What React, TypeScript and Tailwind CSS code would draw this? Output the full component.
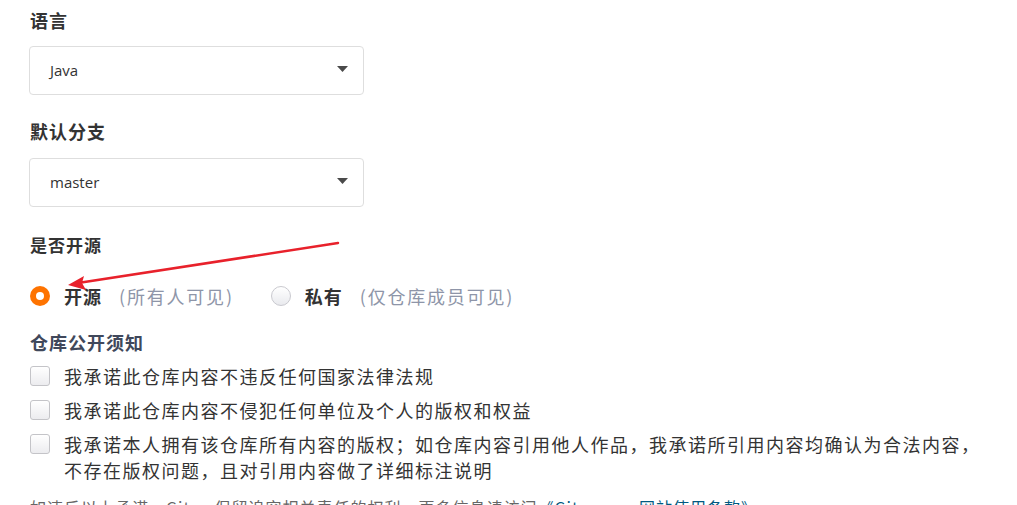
import { useState } from 'react'

const FONT = '[font-family:"Microsoft_YaHei","Noto_Sans_CJK_SC","Noto_Sans",sans-serif]'

const TERMS = [
  '我承诺此仓库内容不违反任何国家法律法规',
  '我承诺此仓库内容不侵犯任何单位及个人的版权和权益',
  '我承诺本人拥有该仓库所有内容的版权；如仓库内容引用他人作品，我承诺所引用内容均确认为合法内容，不存在版权问题，且对引用内容做了详细标注说明',
]

function Select({ value }: { value: string }) {
  return (
    <div className="flex h-[49px] w-[335px] items-center justify-between rounded-[4px] border border-[#dedede] bg-white pl-[20px] pr-[15px]">
      <span className="text-[15px] text-[#333] [font-family:'Open_Sans','Noto_Sans',sans-serif]">{value}</span>
      <svg width="11" height="6" viewBox="0 0 11 6" className="mb-[3px]">
        <path d="M0 0h11L5.5 6z" fill="#4a4a4a" />
      </svg>
    </div>
  )
}

function Radio({ checked }: { checked: boolean }) {
  return checked ? (
    <span className="flex size-[20px] items-center justify-center rounded-full bg-[#fe7300]">
      <span className="size-[8px] rounded-full bg-white" />
    </span>
  ) : (
    <span className="size-[20px] rounded-full border border-[#c9c9cf] bg-gradient-to-b from-white to-[#e9eaee]" />
  )
}

export default function App() {
  const [open, setOpen] = useState(true)
  const [agreed, setAgreed] = useState<boolean[]>([false, false, false])

  return (
    <div className={`relative h-[505px] w-[1017px] overflow-hidden bg-white pl-[30px] pt-[7px] ${FONT}`}>
      <h3 className="text-[18px] font-bold leading-[26px] tracking-[1px] text-[#333]">语言</h3>
      <div className="mt-[13px] -ml-px">
        <Select value="Java" />
      </div>

      <h3 className="mt-[23px] text-[18px] font-bold leading-[26px] tracking-[1px] text-[#333]">默认分支</h3>
      <div className="mt-[14px] -ml-px">
        <Select value="master" />
      </div>

      <h3 className="mt-[25px] text-[17px] font-bold leading-[26px] tracking-[1px] text-[#333]">是否开源</h3>

      <div className="mt-[25px] flex items-center text-[18px] leading-[26px]">
        <button type="button" onClick={() => setOpen(true)} className="flex items-center">
          <Radio checked={open} />
          <span className="ml-[14px] font-bold tracking-[1px] text-[#333]">开源</span>
          <span className="ml-[17px] tracking-[1.8px] text-[#8e95a8]">(所有人可见)</span>
        </button>
        <button type="button" onClick={() => setOpen(false)} className="ml-[37px] flex items-center">
          <Radio checked={!open} />
          <span className="ml-[14px] font-bold tracking-[1px] text-[#333]">私有</span>
          <span className="ml-[17px] tracking-[1.8px] text-[#8e95a8]">(仅仓库成员可见)</span>
        </button>
      </div>

      <h3 className="mt-[20px] text-[18px] font-bold leading-[26px] tracking-[1px] text-[#40485b]">仓库公开须知</h3>

      <div className="mt-[8px] flex flex-col gap-[8px]">
        {TERMS.map((t, i) => (
          <label key={i} className="flex items-start">
            <button
              type="button"
              onClick={() => setAgreed((a) => a.map((v, j) => (j === i ? !v : v)))}
              className={`mt-[3px] size-[20px] shrink-0 rounded-[3px] border ${agreed[i] ? 'border-[#fe7300] bg-[#fe7300]' : 'border-[#c4c4c8] bg-gradient-to-b from-white to-[#ececef]'}`}
            />
            <span className="ml-[14px] w-[920px] text-[18px] leading-[26px] tracking-[1.5px] text-[#333]">{t}</span>
          </label>
        ))}
      </div>

      <p className="mt-[12px] text-[16px] leading-[24px] tracking-[1px] text-[#666]">
        如违反以上承诺，Gitee 保留追究相关责任的权利，更多信息请访问<a className="text-[#005980]">《Gitee.com网站使用条款》</a>
      </p>

      <svg className="pointer-events-none absolute left-0 top-0" width="1017" height="505">
        <line x1="338" y1="243" x2="78" y2="283" stroke="#e8212b" strokeWidth="2.5" strokeLinecap="round" />
        <path d="M68 285 L84 276 L82 283 L86 290 Z" fill="#e8212b" />
      </svg>
    </div>
  )
}
